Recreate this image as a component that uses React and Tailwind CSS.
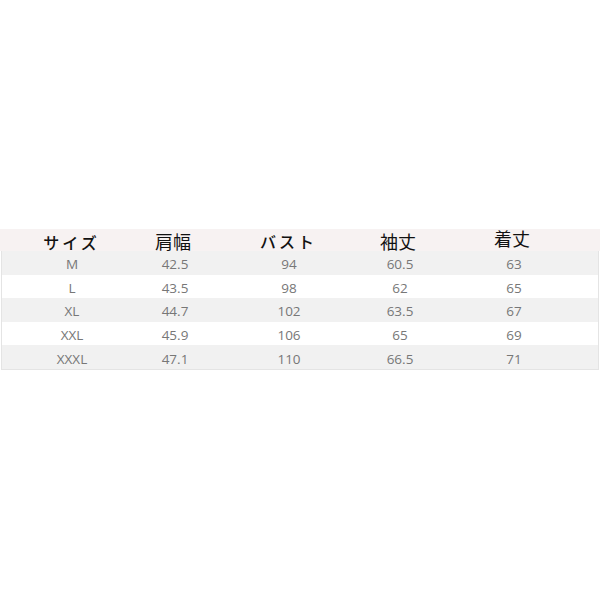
const rows = [
  ["M", "42.5", "94", "60.5", "63"],
  ["L", "43.5", "98", "62", "65"],
  ["XL", "44.7", "102", "63.5", "67"],
  ["XXL", "45.9", "106", "65", "69"],
  ["XXXL", "47.1", "110", "66.5", "71"],
];

const gaps = ["ml-[20px]", "ml-[3px]", "ml-[14px]", "ml-[11px]", "ml-[14px]"];

const headers = [
  { t: "サイズ", c: "font-medium tracking-[3px] text-[16px] translate-y-[2px] pl-[3px]" },
  { t: "肩幅", c: "text-[18px] translate-y-[1px]" },
  { t: "バスト", c: "font-medium tracking-[3px] text-[16px] translate-y-[1px] pl-[3px]" },
  { t: "袖丈", c: "text-[18px] translate-y-[1px]" },
  { t: "着丈", c: "text-[18px] -translate-y-[2px]" },
];

const App = () => {
  return (
    <div className="w-[600px] h-[600px] bg-white pt-[229px]">
      <div className="flex h-[22px] items-end bg-[#f7f2f2]">
        {headers.map((h, i) => (
          <div
            key={i}
            className={`${gaps[i]} w-[100px] shrink-0 text-center leading-[22px] text-[#111] font-['Noto_Sans_CJK_JP',sans-serif] ${h.c}`}
          >
            {h.t}
          </div>
        ))}
      </div>
      <div className="mx-[1px] border-x border-b border-[#e4e4e4]">
        {rows.map((r, i) => (
          <div
            key={i}
            className={`flex h-[23.6px] items-center ${i % 2 === 0 ? "bg-[#f1f1f1]" : "bg-white"}`}
          >
            {r.map((t, j) => (
              <div
                key={j}
                className={`${gaps[j]} w-[100px] shrink-0 text-center text-[13.5px] leading-[23px] text-[#777] translate-y-[2px] font-['Open_Sans',sans-serif]`}
              >
                {t}
              </div>
            ))}
          </div>
        ))}
      </div>
    </div>
  );
};

export default App;
